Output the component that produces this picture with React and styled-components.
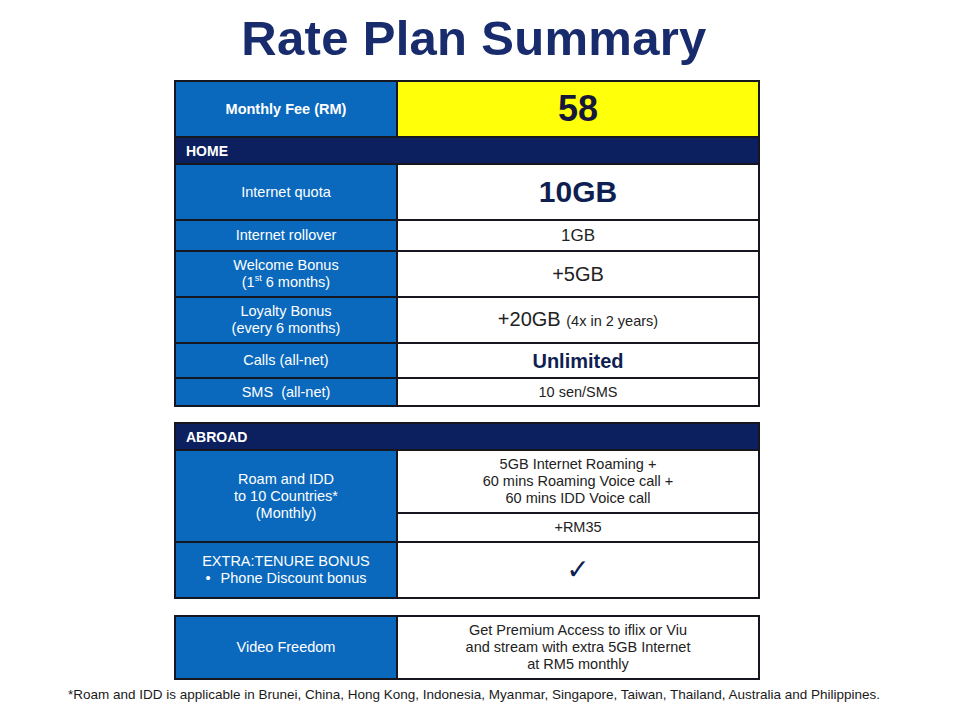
import styled, { createGlobalStyle } from "styled-components";

const GlobalStyle = createGlobalStyle`
  html, body { margin: 0; padding: 0; background: #ffffff; }
  body { font-family: "Liberation Sans", Arial, sans-serif; }
`;

const Page = styled.div`
  width: 960px;
  height: 716px;
  background: #fff;
  overflow: hidden;
`;

const Title = styled.h1`
  margin: 0;
  height: 80px;
  line-height: 76px;
  text-align: center;
  font-size: 49px;
  font-weight: bold;
  color: #182b6c;
  letter-spacing: 0.3px;
  padding-right: 12px;
`;

const Table = styled.div`
  display: grid;
  grid-template-columns: 220px 1fr;
  grid-template-rows: ${(p) => p.rows};
  gap: 2px;
  width: 586px;
  margin: 0 0 0 174px;
  margin-bottom: ${(p) => p.after || 0}px;
  background: #15161f;
  border: 2px solid #15161f;
  box-sizing: border-box;
`;

const Section = styled.div`
  grid-column: 1 / 3;
  background: #0c1f5e;
  color: #fff;
  font-weight: bold;
  font-size: 14px;
  display: flex;
  align-items: center;
  padding-left: 10px;
`;

const Label = styled.div`
  background: #0a69bd;
  color: #fff;
  font-size: 14.5px;
  line-height: 17px;
  font-weight: ${(p) => (p.bold ? "bold" : "normal")};
  grid-row: ${(p) => p.span || "auto"};
  display: flex;
  flex-direction: column;
  align-items: center;
  justify-content: center;
  text-align: center;
`;

const Value = styled.div`
  background: ${(p) => (p.yellow ? "#ffff0a" : "#fff")};
  color: ${(p) => p.color || "#222"};
  font-size: ${(p) => p.size || 14.5}px;
  font-weight: ${(p) => (p.bold ? "bold" : "normal")};
  line-height: ${(p) => p.lh || "17px"};
  display: flex;
  flex-direction: column;
  align-items: center;
  justify-content: center;
  text-align: center;
`;

const Small = styled.span`
  font-size: 14.5px;
`;

const Sup = styled.sup`
  font-size: 9px;
  line-height: 0;
`;

const Bullet = styled.span`
  display: inline-block;
  margin-right: 10px;
`;

const Check = styled.span`
  font-family: "DejaVu Sans", sans-serif;
  font-weight: bold;
`;

const Note = styled.p`
  margin: 7px 0 0;
  text-align: center;
  font-size: 13.5px;
  color: #1a1a1a;
  padding-right: 12px;
`;

export default function App() {
  return (
    <Page>
      <GlobalStyle />
      <Title>Rate Plan Summary</Title>

      <Table rows="54px 25px 54px 29px 44px 44px 33px 26px" after={15}>
        <Label bold>Monthly Fee (RM)</Label>
        <Value yellow size={36} bold color="#15183a" lh="40px">58</Value>
        <Section>HOME</Section>
        <Label>Internet quota</Label>
        <Value size={30} bold color="#0f1f52" lh="34px">10GB</Value>
        <Label>Internet rollover</Label>
        <Value size={17}>1GB</Value>
        <Label>
          <span>Welcome Bonus</span>
          <span>
            (1<Sup>st</Sup> 6 months)
          </span>
        </Label>
        <Value size={20} lh="22px">+5GB</Value>
        <Label>
          <span>Loyalty Bonus</span>
          <span>(every 6 months)</span>
        </Label>
        <Value size={20} lh="22px">
          <span>
            +20GB <Small>(4x in 2 years)</Small>
          </span>
        </Value>
        <Label>Calls (all-net)</Label>
        <Value size={20} bold color="#0f1f52" lh="22px">Unlimited</Value>
        <Label>SMS&nbsp; (all-net)</Label>
        <Value>10 sen/SMS</Value>
      </Table>

      <Table rows="25px 61px 27px 54px" after={16}>
        <Section>ABROAD</Section>
        <Label span="span 2">
          <span>Roam and IDD</span>
          <span>to 10 Countries*</span>
          <span>(Monthly)</span>
        </Label>
        <Value>
          <span>5GB Internet Roaming +</span>
          <span>60 mins Roaming Voice call +</span>
          <span>60 mins IDD Voice call</span>
        </Value>
        <Value>+RM35</Value>
        <Label>
          <span>EXTRA:TENURE BONUS</span>
          <span>
            <Bullet>•</Bullet>Phone Discount bonus
          </span>
        </Label>
        <Value size={28} color="#0f1f52" lh="30px">
          <Check>✓</Check>
        </Value>
      </Table>

      <Table rows="61px">
        <Label>Video Freedom</Label>
        <Value>
          <span>Get Premium Access to iflix or Viu</span>
          <span>and stream with extra 5GB Internet</span>
          <span>at RM5 monthly</span>
        </Value>
      </Table>

      <Note>
        *Roam and IDD is applicable in Brunei, China, Hong Kong, Indonesia, Myanmar, Singapore,
        Taiwan, Thailand, Australia and Philippines.
      </Note>
    </Page>
  );
}
